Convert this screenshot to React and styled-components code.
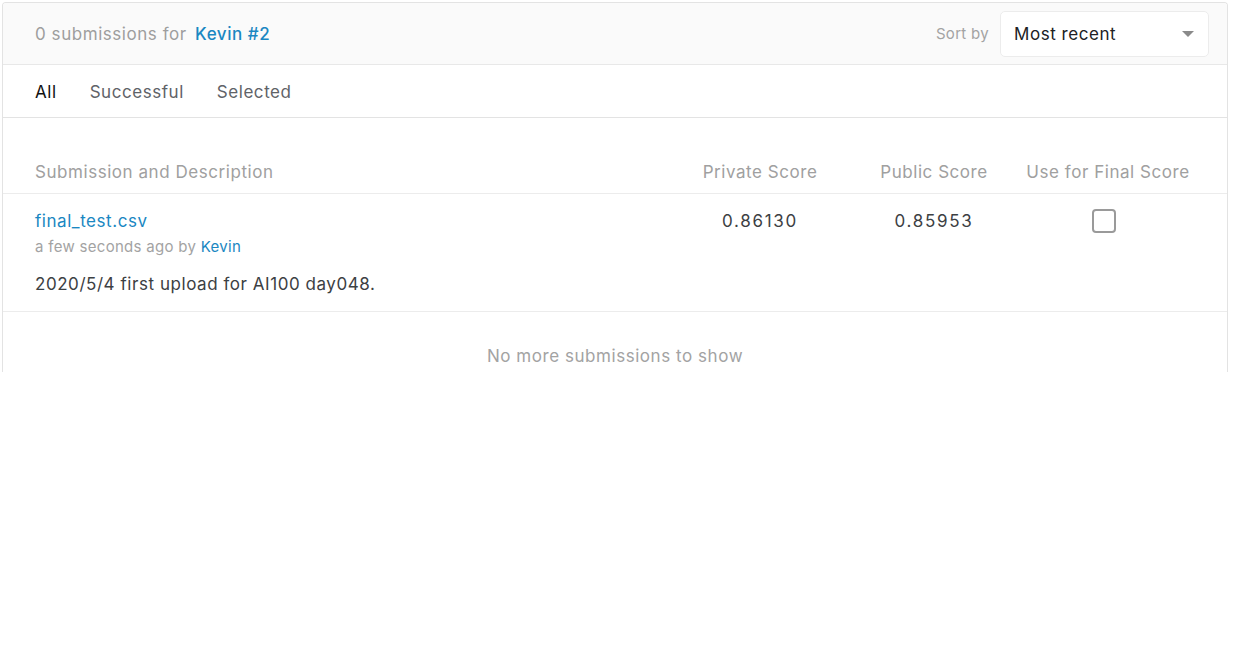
import React from 'react'
import styled, { createGlobalStyle } from 'styled-components'

const GlobalStyle = createGlobalStyle`
  body {
    margin: 0;
    background: #fff;
    font-family: Inter, "Noto Sans", sans-serif;
  }
`

const Page = styled.div`
  padding: 2px 8px 0 2px;
`

const Card = styled.div`
  width: 1226px;
  height: 370px;
  box-sizing: border-box;
  border: 1px solid #e3e3e3;
  border-bottom: none;
  border-radius: 4px 4px 0 0;
  overflow: hidden;
  letter-spacing: 0.55px;
`

const Header = styled.div`
  display: flex;
  align-items: center;
  justify-content: space-between;
  height: 62px;
  box-sizing: border-box;
  padding: 0 18px 0 32px;
  background: #fafafa;
  border-bottom: 1px solid #e8e8e8;
`

const Title = styled.div`
  font-size: 17px;
  color: #9e9e9e;
`

const Link = styled.a`
  color: #1a87c2;
  font-weight: ${(p) => p.weight || 400};
  margin-left: ${(p) => p.gap || 0}px;
  text-decoration: none;
`

const SortGroup = styled.div`
  display: flex;
  align-items: center;
  gap: 11px;
`

const SortLabel = styled.span`
  font-size: 15px;
  letter-spacing: 0.3px;
  color: #a3a3a3;
`

const Select = styled.div`
  position: relative;
  width: 209px;
  height: 46px;
  box-sizing: border-box;
  padding: 0 13px;
  display: flex;
  align-items: center;
  background: #fff;
  border: 1px solid #ececec;
  border-radius: 5px;
  font-size: 17px;
  color: #202124;
`

const Caret = styled.span`
  position: absolute;
  right: 14px;
  top: 19px;
  width: 0;
  height: 0;
  border-left: 6px solid transparent;
  border-right: 6px solid transparent;
  border-top: 6px solid #8a8a8a;
`

const Tabs = styled.div`
  display: flex;
  gap: 33px;
  height: 53px;
  box-sizing: border-box;
  align-items: center;
  padding: 0 32px;
  border-bottom: 1px solid #e3e3e3;
`

const Tab = styled.span`
  font-size: 17px;
  color: ${(p) => (p.active ? '#111' : '#5f6368')};
  padding-top: 1px;
`

const Grid = styled.div`
  display: grid;
  grid-template-columns: 1fr 174px 174px 174px;
  padding: 0 32px;
  border-bottom: 1px solid #ececec;
  box-sizing: border-box;
`

const HeadRow = styled(Grid)`
  height: 76px;
  align-items: end;
  padding-bottom: 11px;
`

const HeadCell = styled.div`
  font-size: 17px;
  color: #a0a0a0;
  text-align: ${(p) => (p.center ? 'center' : 'left')};
`

const BodyRow = styled(Grid)`
  height: 118px;
  padding-top: 16px;
`

const Cell = styled.div`
  text-align: center;
  font-size: 17px;
  color: #3c4043;
  letter-spacing: 1.7px;
  margin-top: 1px;
`

const FileName = styled(Link)`
  display: block;
  font-size: 17px;
  line-height: 22px;
`

const Meta = styled.div`
  margin-top: 5px;
  font-size: 15px;
  line-height: 20px;
  letter-spacing: 0.3px;
  color: #a3a3a3;
`

const Desc = styled.div`
  margin-top: 16px;
  font-size: 17px;
  line-height: 22px;
  color: #3c4043;
`

const Checkbox = styled.span`
  display: inline-block;
  width: 20px;
  height: 20px;
  margin-left: -9px;
  margin-top: -2px;
  border: 2px solid #9a9a9a;
  border-radius: 4px;
`

const Empty = styled.div`
  text-align: center;
  font-size: 17px;
  color: #a3a3a3;
  padding-top: 34px;
`

export default function App() {
  return (
    <Page>
      <GlobalStyle />
      <Card>
        <Header>
          <Title>
            0 submissions for <Link weight={500} gap={3}>Kevin #2</Link>
          </Title>
          <SortGroup>
            <SortLabel>Sort by</SortLabel>
            <Select>
              Most recent
              <Caret />
            </Select>
          </SortGroup>
        </Header>
        <Tabs>
          <Tab active>All</Tab>
          <Tab>Successful</Tab>
          <Tab>Selected</Tab>
        </Tabs>
        <HeadRow>
          <HeadCell>Submission and Description</HeadCell>
          <HeadCell center>Private Score</HeadCell>
          <HeadCell center>Public Score</HeadCell>
          <HeadCell center>Use for Final Score</HeadCell>
        </HeadRow>
        <BodyRow>
          <div>
            <FileName>final_test.csv</FileName>
            <Meta>
              a few seconds ago by <Link>Kevin</Link>
            </Meta>
            <Desc>2020/5/4 first upload for AI100 day048.</Desc>
          </div>
          <Cell>0.86130</Cell>
          <Cell>0.85953</Cell>
          <Cell>
            <Checkbox />
          </Cell>
        </BodyRow>
        <Empty>No more submissions to show</Empty>
      </Card>
    </Page>
  )
}
